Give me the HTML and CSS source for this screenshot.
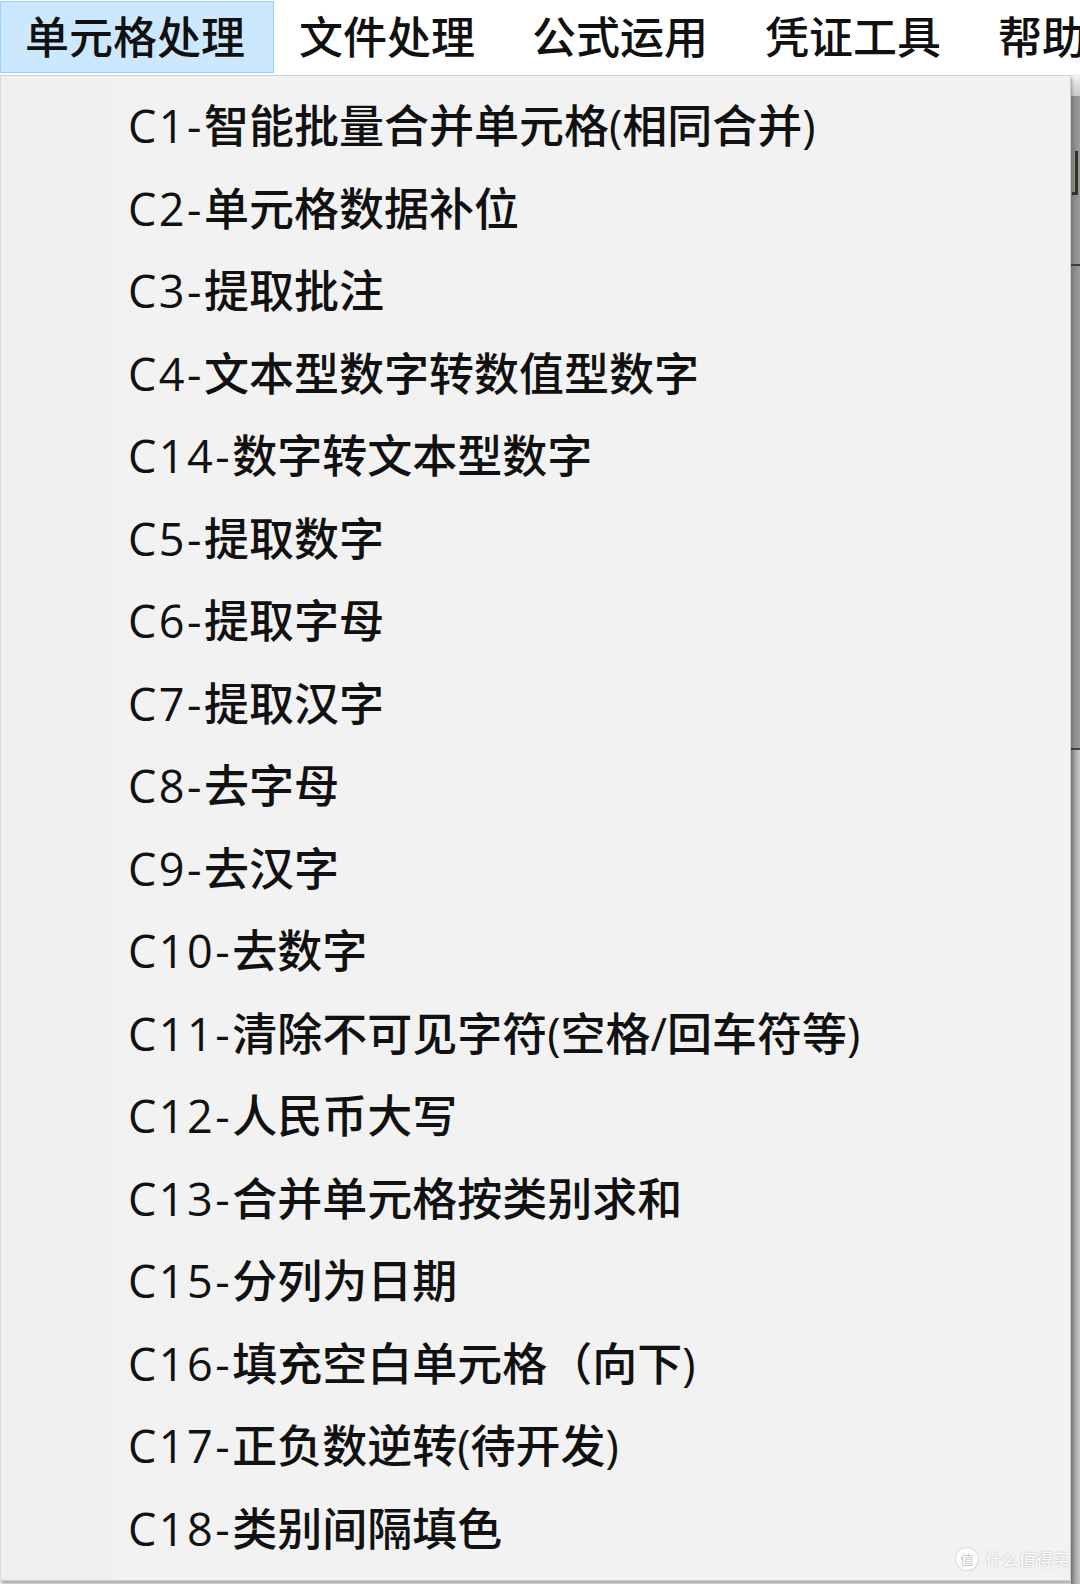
FILE: index.html
```html
<!DOCTYPE html>
<html lang="zh-CN">
<head>
<meta charset="utf-8">
<title>单元格处理</title>
<link rel="stylesheet" href="styles.css">
</head>
<body>
<nav class="menubar">
  <div class="menubar__item is-open">单元格处理</div>
  <div class="menubar__item">文件处理</div>
  <div class="menubar__item">公式运用</div>
  <div class="menubar__item">凭证工具</div>
  <div class="menubar__item">帮助</div>
</nav>
<div class="workspace">
  <div class="dropdown">
    <ul class="dropdown__list">
      <li><span class="code">C1-</span>智能批量合并单元格(相同合并)</li>
      <li><span class="code">C2-</span>单元格数据补位</li>
      <li><span class="code">C3-</span>提取批注</li>
      <li><span class="code">C4-</span>文本型数字转数值型数字</li>
      <li><span class="code">C14-</span>数字转文本型数字</li>
      <li><span class="code">C5-</span>提取数字</li>
      <li><span class="code">C6-</span>提取字母</li>
      <li><span class="code">C7-</span>提取汉字</li>
      <li><span class="code">C8-</span>去字母</li>
      <li><span class="code">C9-</span>去汉字</li>
      <li><span class="code">C10-</span>去数字</li>
      <li><span class="code">C11-</span>清除不可见字符(空格/回车符等)</li>
      <li><span class="code">C12-</span>人民币大写</li>
      <li><span class="code">C13-</span>合并单元格按类别求和</li>
      <li><span class="code">C15-</span>分列为日期</li>
      <li><span class="code">C16-</span>填充空白单元格（向下)</li>
      <li><span class="code">C17-</span>正负数逆转(待开发)</li>
      <li><span class="code">C18-</span>类别间隔填色</li>
    </ul>
    <div class="watermark"><span class="watermark__logo">值</span><span class="watermark__name">什么值得买</span></div>
  </div>
  <div class="backdrop">
    <div class="backdrop__top"></div>
    <div class="backdrop__upper"><span class="backdrop__glyph"></span><span class="backdrop__rule"></span></div>
    <div class="backdrop__lower"></div>
  </div>
</div>
</body>
</html>
```

FILE: styles.css
```css
html, body {
  margin: 0;
  padding: 0;
  background: #ffffff;
  overflow: hidden;
}

body {
  width: 1080px;
  height: 1584px;
  font-family: "Noto Sans CJK SC", "Noto Sans", sans-serif;
  color: #000;
}

/* top menu bar */
.menubar {
  display: flex;
  height: 74px;
  box-sizing: border-box;
  padding-top: 1px;
  background: #ffffff;
  white-space: nowrap;
}

.menubar__item {
  height: 72px;
  box-sizing: border-box;
  padding: 0 31px 0 24px;
  border: 1px solid transparent;
  font-size: 44px;
  font-weight: 500;
  line-height: 67px;
  color: #111;
  flex-shrink: 0;
}

.menubar__item.is-open {
  background: #cce8ff;
  border-color: #99d1ff;
  padding-left: 24px;
  padding-right: 28px;
}

/* area under the bar */
.workspace {
  display: flex;
  height: 1510px;
}

.dropdown {
  position: relative;
  width: 1071px;
  height: 1506px;
  margin-top: 1px;
  box-sizing: border-box;
  border: 1px solid #cfcfcf;
  border-left-color: #d9d9d9;
  background: linear-gradient(to right, #f0f0f0 0, #f0f0f0 112px, #f2f2f2 112px);
  box-shadow: 1px 3px 3px rgba(0, 0, 0, 0.32);
  flex-shrink: 0;
}

.dropdown__list {
  list-style: none;
  margin: 0;
  padding: 9px 0 0;
}

.dropdown__list li {
  height: 82.5px;
  line-height: 82.5px;
  padding-left: 127px;
  font-family: "Open Sans", "Noto Sans CJK SC", sans-serif;
  font-size: 45px;
  font-weight: 500;
  white-space: nowrap;
  color: #111;
}

.dropdown__list .code {
  letter-spacing: 2.5px;
}

.watermark {
  position: absolute;
  right: 0;
  bottom: 10px;
  display: flex;
  align-items: center;
  gap: 7px;
  color: #ffffff;
  text-shadow: 0 0 2px rgba(0, 0, 0, 0.3);
}

.watermark__logo {
  width: 22px;
  height: 22px;
  border-radius: 50%;
  background: #ffffff;
  color: #cfcfcf;
  font-size: 14px;
  line-height: 22px;
  text-align: center;
  box-shadow: 0 0 2px rgba(0, 0, 0, 0.3);
  text-shadow: none;
}

.watermark__name {
  font-size: 17px;
  line-height: 22px;
}

/* window behind the popup, seen at the right edge */
.backdrop {
  flex: 1;
  display: flex;
  flex-direction: column;
}

.backdrop__top {
  height: 22px;
  background: linear-gradient(to bottom, #f4f4f4, #c9c9c9);
}

.backdrop__upper {
  position: relative;
  height: 652px;
  background: linear-gradient(to right, #777 0, #8a8a8a 40%, #9c9c9c 100%);
}

.backdrop__glyph {
  position: absolute;
  left: 1px;
  top: 55px;
  width: 6px;
  height: 44px;
  border-right: 3px solid #3a3020;
  border-bottom: 3px solid #3a3020;
  box-sizing: border-box;
}

.backdrop__rule {
  position: absolute;
  left: 0;
  right: 0;
  top: 168px;
  height: 2px;
  background: #3c3c3c;
}

.backdrop__lower {
  flex: 1;
  border-top: 2px solid #444;
  background: linear-gradient(to right, #8c8c8c 0, #a8a8a8 50%, #c8c8c8 100%);
}
```
